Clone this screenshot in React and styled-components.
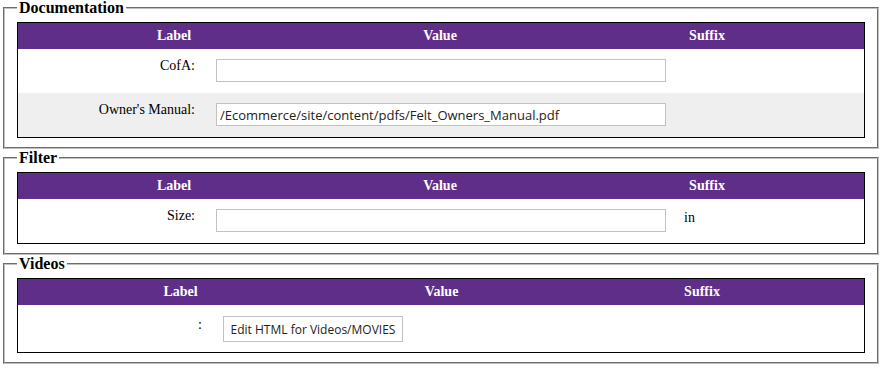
import React from "react";
import styled, { createGlobalStyle } from "styled-components";

const GlobalStyle = createGlobalStyle`
  html, body { margin: 0; padding: 0; background: #fff; }
  body { font-family: "Liberation Serif", "Times New Roman", serif; color: #000; }
`;

const Page = styled.div`
  padding: 0 12px 0 3px;
`;

const Fieldset = styled.fieldset`
  margin: 0 0 1px 0;
  padding: 6px 12px 9px 12px;
  border: 2px groove rgb(192, 192, 192);
  min-width: 0;
`;

const Legend = styled.legend`
  padding: 0 2px;
  font-family: "Liberation Serif", "Times New Roman", serif;
  font-weight: bold;
  font-size: 16px;
  line-height: 16px;
  color: #000;
`;

const Table = styled.div`
  border: 1px solid #000;
`;

const HeaderRow = styled.div`
  display: grid;
  grid-template-columns: ${(p) => p.$cols};
  height: 26px;
  align-items: center;
  background: #5f2e88;
`;

const HeaderCell = styled.div`
  text-align: center;
  color: #fff;
  font: bold 14px/16px "Liberation Serif", "Times New Roman", serif;
`;

const Row = styled.div`
  display: grid;
  grid-template-columns: ${(p) => p.$cols};
  align-items: start;
  padding: ${(p) => (p.$tall ? "11px 0 10px" : "10px 0 11px")};
  background: ${(p) => (p.$alt ? "#efefef" : "#fff")};
`;

const LabelCell = styled.div`
  text-align: right;
  padding-right: 11px;
  margin-top: ${(p) => (p.$tall ? "1px" : "-1px")};
  font: 14px/16px "Liberation Serif", "Times New Roman", serif;
  color: #000;
`;

const ValueCell = styled.div`
  padding-left: 10px;
  display: flex;
`;

const SuffixCell = styled.div`
  padding-left: 8px;
  margin-top: 1px;
  font: 14px/16px "Liberation Serif", "Times New Roman", serif;
  color: #000;
`;

const TextInput = styled.input`
  box-sizing: border-box;
  width: 450px;
  height: 23px;
  margin: 0;
  padding: 0 3px;
  border: 1px solid #c2c2c2;
  background: #fff;
  font: 13px "Open Sans", "Noto Sans", sans-serif;
  color: #222;
  outline: none;
`;

const Button = styled.button`
  box-sizing: border-box;
  width: 180px;
  height: 26px;
  margin: 0;
  padding: 0;
  border: 1px solid #c2c2c2;
  background: #fff;
  font: 12px "Open Sans", "Noto Sans", sans-serif;
  white-space: nowrap;
  color: #222;
`;

const sections = [
  {
    title: "Documentation",
    head: "312px 220px 1fr",
    body: "188px 470px 1fr",
    rows: [
      { label: "CofA:", value: "" },
      { label: "Owner's Manual:", value: "/Ecommerce/site/content/pdfs/Felt_Owners_Manual.pdf" },
    ],
  },
  {
    title: "Filter",
    head: "312px 220px 1fr",
    body: "188px 470px 1fr",
    rows: [{ label: "Size:", value: "", suffix: "in" }],
  },
  {
    title: "Videos",
    head: "325px 197px 1fr",
    body: "195px 470px 1fr",
    rows: [{ label: ":", button: "Edit HTML for Videos/MOVIES" }],
  },
];

export default function App() {
  return (
    <>
      <GlobalStyle />
      <Page>
        {sections.map((s) => (
          <Fieldset key={s.title}>
            <Legend>{s.title}</Legend>
            <Table>
              <HeaderRow $cols={s.head}>
                <HeaderCell>Label</HeaderCell>
                <HeaderCell>Value</HeaderCell>
                <HeaderCell>Suffix</HeaderCell>
              </HeaderRow>
              {s.rows.map((r, i) => (
                <Row key={i} $cols={s.body} $alt={i % 2 === 1} $tall={!!r.button}>
                  <LabelCell $tall={!!r.button}>{r.label}</LabelCell>
                  <ValueCell>
                    {r.button ? (
                      <Button type="button">{r.button}</Button>
                    ) : (
                      <TextInput type="text" defaultValue={r.value} />
                    )}
                  </ValueCell>
                  <SuffixCell>{r.suffix || ""}</SuffixCell>
                </Row>
              ))}
            </Table>
          </Fieldset>
        ))}
      </Page>
    </>
  );
}
